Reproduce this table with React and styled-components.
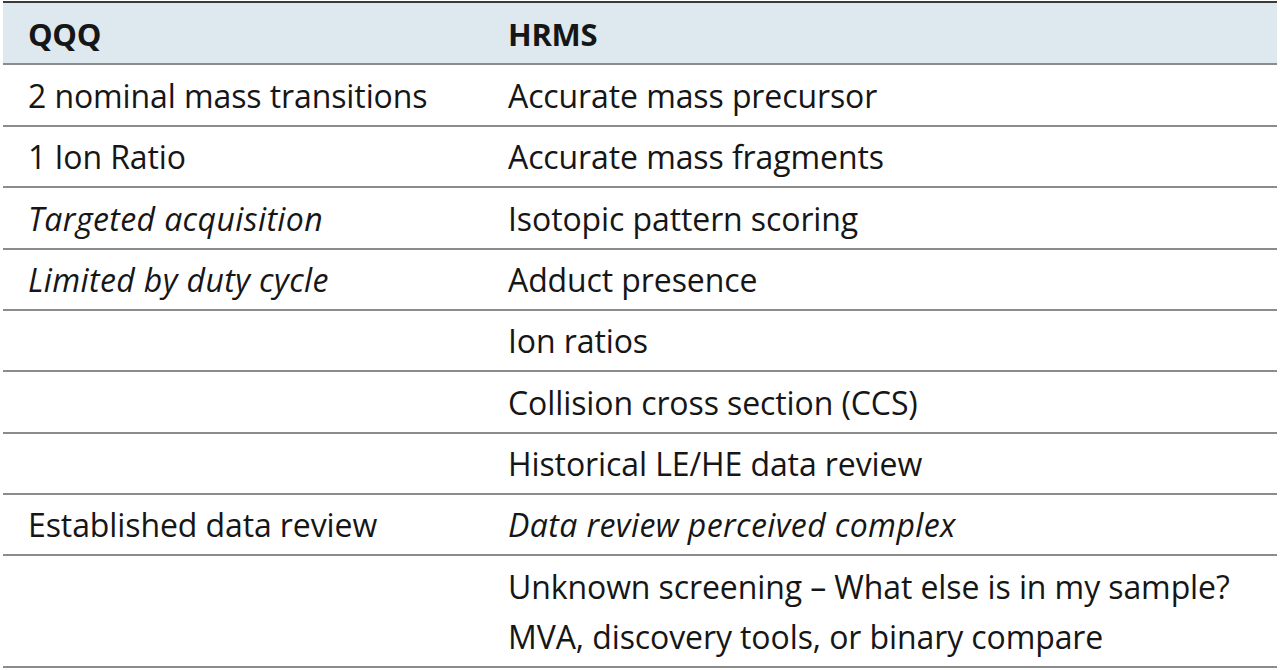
import React from "react";
import styled, { createGlobalStyle } from "styled-components";

const Global = createGlobalStyle`
  html, body { margin: 0; padding: 0; background: #ffffff; }
  body { font-family: "Open Sans", "Noto Sans", sans-serif; color: #161616; }
`;

const Page = styled.div`
  width: 1280px;
  height: 670px;
  padding: 1px 3px 0 3px;
  box-sizing: border-box;
  overflow: hidden;
`;

const Table = styled.div`
  display: flex;
  flex-direction: column;
  border-top: 2px solid #3a3a3a;
`;

const Row = styled.div`
  display: grid;
  grid-template-columns: 480px 1fr;
  align-items: center;
  box-sizing: border-box;
  height: ${(p) => p.$h}px;
  background: ${(p) => (p.$head ? "#dde9ef" : "#ffffff")};
  border-bottom: 2px solid #8c8c8c;
`;

const Cell = styled.div`
  padding-left: 25px;
  padding-top: 1px;
  font-size: ${(p) => (p.$head ? 31 : 32)}px;
  line-height: 50px;
  font-weight: ${(p) => (p.$head ? 700 : 400)};
  font-style: ${(p) => (p.$italic ? "italic" : "normal")};
  letter-spacing: ${(p) => (p.$head ? "-0.3px" : p.$italic ? "0.4px" : "-0.1px")};
  white-space: nowrap;
`;

const rows = [
  { a: "2 nominal mass transitions", b: "Accurate mass precursor", h: 62 },
  { a: "1 Ion Ratio", b: "Accurate mass fragments", h: 61 },
  { a: "Targeted acquisition", ai: true, b: "Isotopic pattern scoring", h: 62 },
  { a: "Limited by duty cycle", ai: true, b: "Adduct presence", h: 61 },
  { a: "", b: "Ion ratios", h: 61 },
  { a: "", b: "Collision cross section (CCS)", h: 62 },
  { a: "", b: "Historical LE/HE data review", h: 61 },
  { a: "Established data review", b: "Data review perceived complex", bi: true, h: 61 },
];

export default function App() {
  return (
    <Page>
      <Global />
      <Table>
        <Row $head $h={62}>
          <Cell $head>QQQ</Cell>
          <Cell $head>HRMS</Cell>
        </Row>
        {rows.map((r, i) => (
          <Row key={i} $h={r.h}>
            <Cell $italic={r.ai}>{r.a}</Cell>
            <Cell $italic={r.bi}>{r.b}</Cell>
          </Row>
        ))}
        <Row $h={112}>
          <Cell />
          <Cell>
            Unknown screening – What else is in my sample?
            <br />
            MVA, discovery tools, or binary compare
          </Cell>
        </Row>
      </Table>
    </Page>
  );
}
